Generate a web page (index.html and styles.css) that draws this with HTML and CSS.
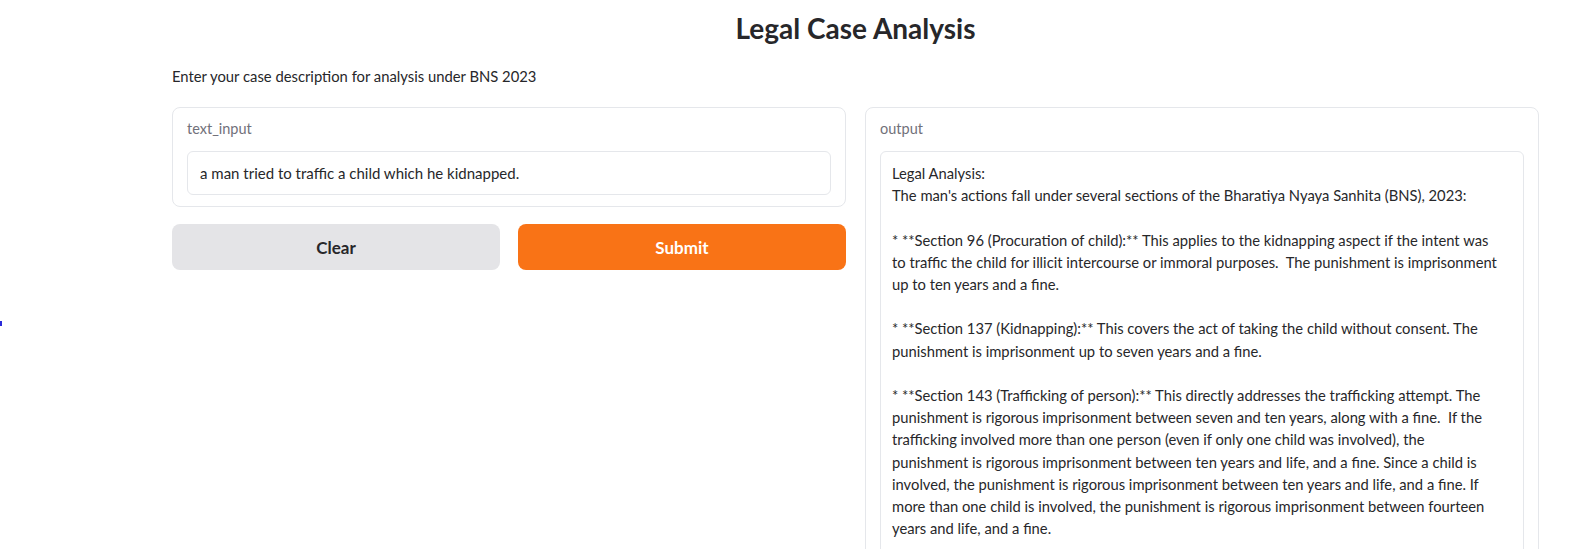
FILE: index.html
```html
<!DOCTYPE html>
<html lang="en">
<head>
<meta charset="utf-8">
<title>Legal Case Analysis</title>
<link rel="stylesheet" href="styles.css">
</head>
<body>
<div class="caret"></div>
<main class="app">
  <h1 class="title">Legal Case Analysis</h1>
  <p class="desc">Enter your case description for analysis under BNS 2023</p>
  <div class="row">
    <div class="col">
      <div class="card">
        <div class="label">text_input</div>
        <div class="input">a man tried to traffic a child which he kidnapped.</div>
      </div>
      <div class="buttons">
        <button class="btn btn-clear">Clear</button>
        <button class="btn btn-submit">Submit</button>
      </div>
    </div>
    <div class="col">
      <div class="card card-out">
        <div class="label">output</div>
        <div class="output">Legal Analysis:
The man's actions fall under several sections of the Bharatiya Nyaya Sanhita (BNS), 2023:

* **Section 96 (Procuration of child):** This applies to the kidnapping aspect if the intent was
to traffic the child for illicit intercourse or immoral purposes.  The punishment is imprisonment
up to ten years and a fine.

* **Section 137 (Kidnapping):** This covers the act of taking the child without consent. The
punishment is imprisonment up to seven years and a fine.

* **Section 143 (Trafficking of person):** This directly addresses the trafficking attempt. The
punishment is rigorous imprisonment between seven and ten years, along with a fine.  If the
trafficking involved more than one person (even if only one child was involved), the
punishment is rigorous imprisonment between ten years and life, and a fine. Since a child is
involved, the punishment is rigorous imprisonment between ten years and life, and a fine. If
more than one child is involved, the punishment is rigorous imprisonment between fourteen
years and life, and a fine.</div>
      </div>
    </div>
  </div>
</main>
</body>
</html>
```

FILE: styles.css
```css
html, body {
  margin: 0;
  padding: 0;
  background: #ffffff;
  overflow: hidden;
}

body {
  font-family: "Lato", "Liberation Sans", sans-serif;
  color: #27272a;
  height: 549px;
}

.caret {
  position: absolute;
  left: 0;
  top: 321px;
  width: 2px;
  height: 5px;
  background: #2b2bd9;
}

.app {
  padding: 0 38px 0 172px;
}

.title {
  margin: 0;
  padding-top: 10px;
  text-align: center;
  font-size: 28px;
  line-height: 36px;
  font-weight: 700;
  color: #27272a;
}

.desc {
  margin: 20px 0 0 0;
  font-size: 14.8px;
  line-height: 20px;
  color: #27272a;
}

.row {
  display: grid;
  grid-template-columns: 1fr 1fr;
  column-gap: 19px;
  margin-top: 21px;
  align-items: start;
}

.col {
  display: flex;
  flex-direction: column;
  gap: 17px;
}

.card {
  border: 1px solid #e5e7eb;
  border-radius: 8px;
  padding: 11px 14px 11px 14px;
  background: #fff;
}

.card-out {
  height: 600px;
}

.label {
  font-size: 14.5px;
  line-height: 20px;
  color: #71717a;
  margin-bottom: 12px;
}

.input {
  border: 1px solid #e5e7eb;
  border-radius: 6px;
  box-sizing: border-box;
  height: 44px;
  padding: 0 12px;
  display: flex;
  align-items: center;
  font-size: 15px;
  color: #27272a;
}

.output {
  border: 1px solid #e5e7eb;
  border-radius: 6px;
  padding: 10px 11px;
  font-size: 14.75px;
  line-height: 22.2px;
  white-space: pre;
  color: #27272a;
  min-height: 420px;
}

.buttons {
  display: grid;
  grid-template-columns: 1fr 1fr;
  column-gap: 18px;
}

.btn {
  height: 46px;
  border: none;
  border-radius: 8px;
  font-family: "Lato", "Liberation Sans", sans-serif;
  font-size: 17px;
  font-weight: 700;
  cursor: pointer;
}

.btn-clear {
  background: #e4e4e7;
  color: #27272a;
}

.btn-submit {
  background: #f97316;
  color: #ffffff;
}
```
